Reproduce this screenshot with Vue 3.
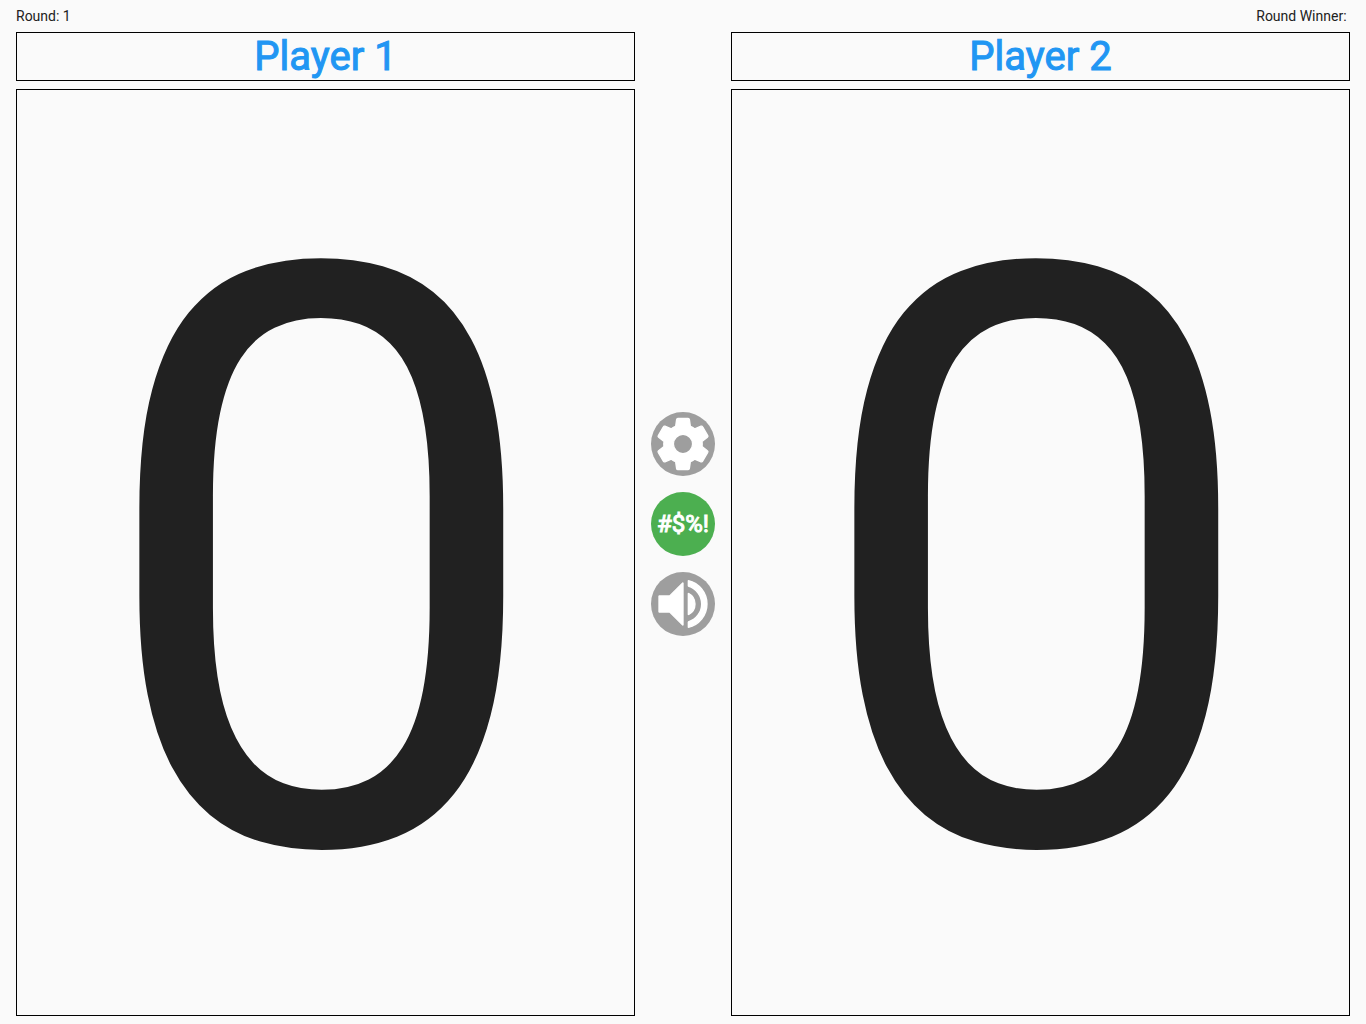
<script setup>
import { ref } from 'vue'

const round = ref(1)
const winner = ref('')
const players = ref([
  { name: 'Player 1', score: 0 },
  { name: 'Player 2', score: 0 },
])
</script>

<template>
  <div class="game">
    <header class="status">
      <span>Round: {{ round }}</span>
      <span class="winner">{{ 'Round Winner: ' + winner }}</span>
    </header>
    <main class="board">
      <section class="player">
        <h2 class="name">{{ players[0].name }}</h2>
        <button class="score" @click="players[0].score++">{{ players[0].score }}</button>
      </section>
      <nav class="actions">
        <button class="action" aria-label="Settings">
          <svg viewBox="0 0 24 24"><path d="M19.14 12.94c.04-.3.06-.61.06-.94 0-.32-.02-.64-.07-.94l2.03-1.58c.18-.14.23-.41.12-.61l-1.92-3.32c-.12-.22-.37-.29-.59-.22l-2.39.96c-.5-.38-1.03-.7-1.62-.94l-.36-2.54c-.04-.24-.24-.41-.48-.41h-3.84c-.24 0-.43.17-.47.41l-.36 2.54c-.59.24-1.13.57-1.62.94l-2.39-.96c-.22-.08-.47 0-.59.22L2.74 8.87c-.12.21-.08.47.12.61l2.03 1.58c-.05.3-.09.63-.09.94s.02.64.07.94l-2.03 1.58c-.18.14-.23.41-.12.61l1.92 3.32c.12.22.37.29.59.22l2.39-.96c.5.38 1.03.7 1.62.94l.36 2.54c.05.24.24.41.48.41h3.84c.24 0 .44-.17.47-.41l.36-2.54c.59-.24 1.13-.56 1.62-.94l2.39.96c.22.08.47 0 .59-.22l1.92-3.32c.12-.22.07-.47-.12-.61l-2.01-1.58zM12 15.6c-1.98 0-3.6-1.62-3.6-3.6s1.62-3.6 3.6-3.6 3.6 1.62 3.6 3.6-1.62 3.6-3.6 3.6z" /></svg>
        </button>
        <button class="action swear">#$%!</button>
        <button class="action" aria-label="Sound">
          <svg viewBox="0 0 24 24"><path d="M3 9v6h4l5 5V4L7 9H3zm13.5 3c0-1.77-1.02-3.29-2.5-4.03v8.05c1.48-.73 2.5-2.25 2.5-4.02zM14 3.23v2.06c2.89.86 5 3.54 5 6.71s-2.11 5.85-5 6.71v2.06c4.01-.91 7-4.49 7-8.77s-2.99-7.86-7-8.77z" /></svg>
        </button>
      </nav>
      <section class="player">
        <h2 class="name">{{ players[1].name }}</h2>
        <button class="score" @click="players[1].score++">{{ players[1].score }}</button>
      </section>
    </main>
  </div>
</template>

<style>
body {
  background: #fafafa;
}
</style>

<style scoped>
.game {
  box-sizing: border-box;
  min-height: 100vh;
  padding: 0 16px 8px;
  display: flex;
  flex-direction: column;
  background: #fafafa;
  color: #212121;
  font-family: Roboto, sans-serif;
  font-size: 14px;
}
.status {
  height: 32px;
  display: flex;
  align-items: center;
  justify-content: space-between;
}
.winner {
  white-space: pre;
}
.board {
  flex: 1;
  display: flex;
  gap: 16px;
}
.player {
  flex: 1;
  min-width: 0;
  display: flex;
  flex-direction: column;
  gap: 8px;
}
.name {
  margin: 0;
  border: 1px solid #000;
  color: #2196f3;
  font-size: 40px;
  line-height: 47px;
  font-weight: 400;
  text-align: center;
  -webkit-text-stroke: 1px currentColor;
}
.score {
  flex: 1;
  padding: 26px 8px 0 0;
  border: 1px solid #000;
  background: none;
  color: inherit;
  font-family: inherit;
  font-size: 810px;
  line-height: 890px;
  font-weight: 400;
  text-align: center;
  overflow: hidden;
  cursor: pointer;
}
.actions {
  display: flex;
  flex-direction: column;
  justify-content: center;
  gap: 16px;
}
.action {
  width: 64px;
  height: 64px;
  padding: 0;
  border: 0;
  border-radius: 50%;
  background: #9e9e9e;
  color: #fff;
  font-family: inherit;
  cursor: pointer;
}
.action svg {
  display: block;
  width: 64px;
  height: 64px;
  fill: currentColor;
  stroke: currentColor;
  stroke-width: 0.5;
  stroke-linejoin: bevel;
}
.swear {
  background: #4caf50;
  font-size: 24px;
  font-weight: 400;
  -webkit-text-stroke: 1px currentColor;
}
</style>
